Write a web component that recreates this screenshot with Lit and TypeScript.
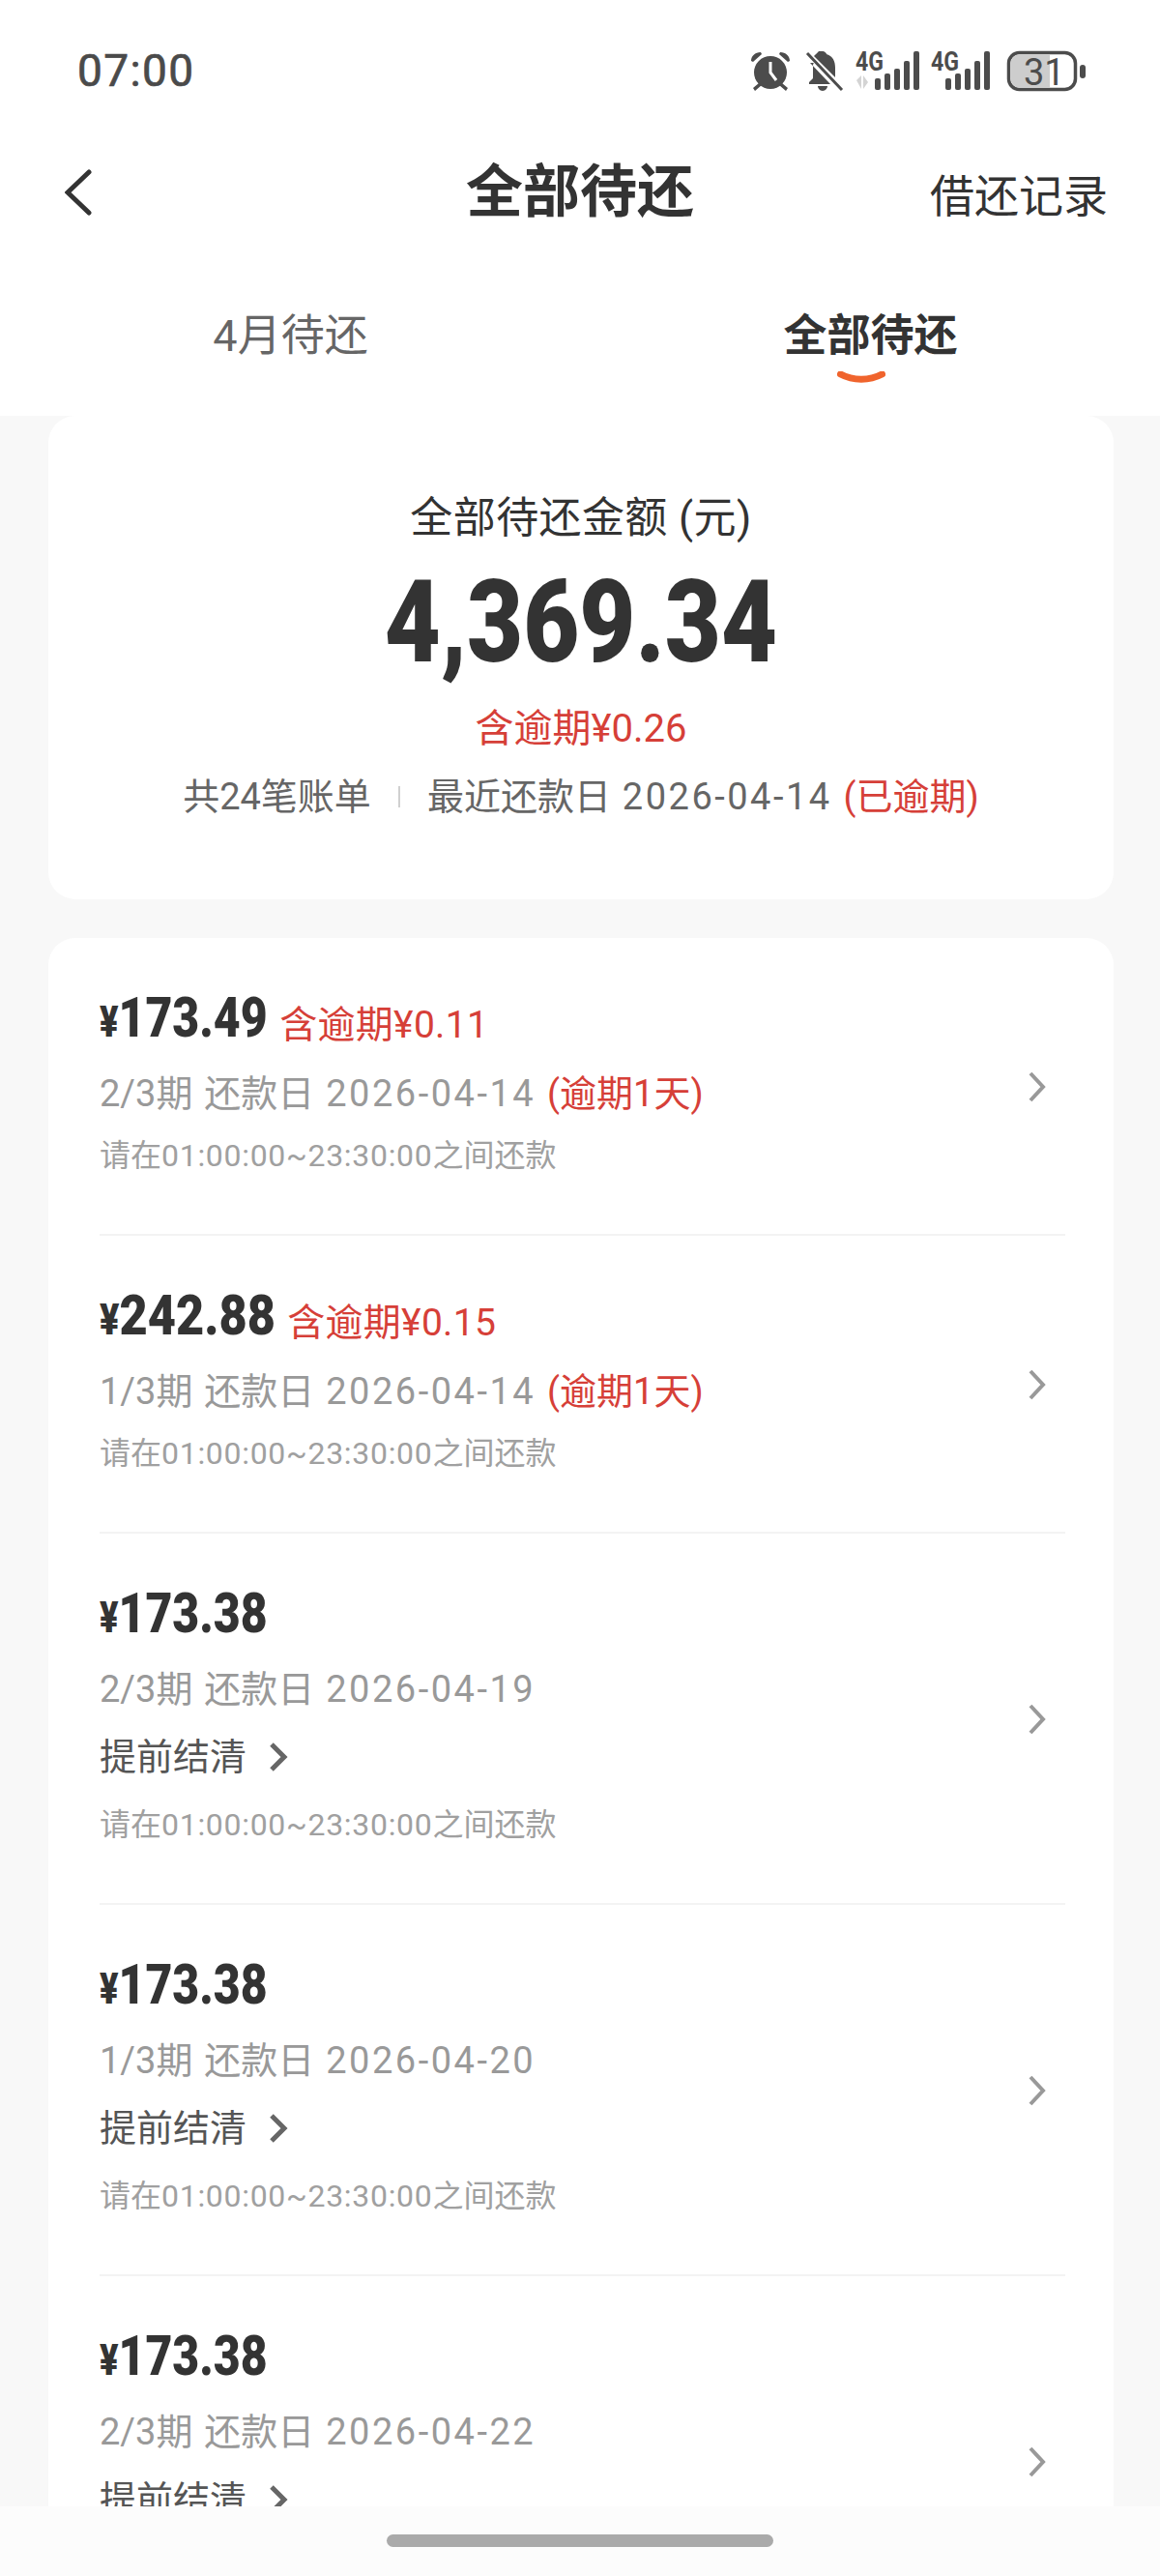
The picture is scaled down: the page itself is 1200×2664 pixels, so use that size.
import { LitElement, html, css, svg, nothing } from "lit";
import { customElement } from "lit/decorators.js";
import { styleMap } from "lit/directives/style-map.js";

interface Bill {
  amount: string;
  scale: number;
  pull: number;
  overdue?: string;
  term: string;
  date: string;
  late?: string;
  settle?: boolean;
}

const bills: Bill[] = [
  { amount: "173.49", scale: 0.83, pull: 36, overdue: "含逾期¥0.11", term: "2/3期", date: "2026-04-14", late: "(逾期1天)" },
  { amount: "242.88", scale: 0.87, pull: 28, overdue: "含逾期¥0.15", term: "1/3期", date: "2026-04-14", late: "(逾期1天)" },
  { amount: "173.38", scale: 0.83, pull: 36, term: "2/3期", date: "2026-04-19", settle: true },
  { amount: "173.38", scale: 0.83, pull: 36, term: "1/3期", date: "2026-04-20", settle: true },
  { amount: "173.38", scale: 0.83, pull: 36, term: "2/3期", date: "2026-04-22", settle: true },
];

const signal = () => svg`
  <rect x="0" y="41" width="6" height="12" rx="2"/>
  <rect x="10" y="36" width="6" height="17" rx="2"/>
  <rect x="20" y="31" width="6" height="22" rx="2"/>
  <rect x="30" y="23" width="6" height="30" rx="2"/>
  <rect x="40" y="13" width="6" height="40" rx="2"/>`;

@customElement("app-root")
export class AppRoot extends LitElement {
  static styles = css`
    :host {
      display: flex;
      flex-direction: column;
      width: 1200px;
      height: 2664px;
      overflow: hidden;
      background: #f8f8f8;
      font-family: Roboto, "Noto Sans CJK SC", sans-serif;
      color: #333;
    }
    .status {
      flex: none;
      height: 146px;
      background: #fff;
      display: flex;
      justify-content: space-between;
      padding-left: 80px;
      box-sizing: border-box;
    }
    .time {
      font-size: 46px;
      line-height: 146px;
      font-weight: 400;
      -webkit-text-stroke: 0.7px #4a4a4a;
      color: #4a4a4a;
      letter-spacing: 1.4px;
    }
    .status-icons {
      flex: none;
      display: block;
    }
    .status-icons .ic { fill: #4c4c4c; }
    .status-icons .g {
      font-family: Roboto, sans-serif;
      font-size: 27px;
      font-weight: 700;
      fill: #4c4c4c;
    }
    .status-icons .bat {
      font-family: Roboto, sans-serif;
      font-size: 38px;
      font-weight: 400;
      fill: #4c4c4c;
    }
    .header {
      flex: none;
      height: 106px;
      background: #fff;
      display: grid;
      grid-template-columns: 1fr auto 1fr;
      align-items: center;
      padding: 0 54px;
    }
    .back { display: block; margin-left: 13px; }
    .title {
      font-size: 59px;
      font-weight: 700;
      line-height: 106px;
      color: #333;
    }
    .records {
      justify-self: end;
      font-size: 46px;
      color: #333;
    }
    .tabs {
      flex: none;
      height: 178px;
      background: #fff;
      display: flex;
      box-sizing: border-box;
      padding-top: 70px;
    }
    .tab {
      display: flex;
      flex-direction: column;
      align-items: center;
      font-size: 45px;
      line-height: 52px;
      color: #666;
    }
    .tab.first { width: 602px; }
    .tab.second {
      width: 600px;
      color: #333;
      font-weight: 700;
    }
    .tab svg { margin: 10px 20px 0 0; display: block; }
    .scroll {
      flex: 1;
      min-height: 0;
      overflow: hidden;
      padding: 0 48px 0 50px;
    }
    .card {
      background: #fff;
      border-radius: 28px;
    }
    .summary {
      height: 500px;
      box-sizing: border-box;
      padding-top: 78px;
      display: flex;
      flex-direction: column;
      align-items: center;
      margin-bottom: 40px;
    }
    .sum-label {
      font-size: 44px;
      line-height: 56px;
      letter-spacing: 0.4px;
      color: #333;
    }
    .sum-num {
      margin-top: 10px;
      font-size: 118px;
      line-height: 140px;
      font-weight: 900;
      transform: scaleX(0.85);
      color: #333;
    }
    .sum-over {
      margin-top: 15px;
      font-size: 40px;
      line-height: 50px;
      color: #d63f38;
    }
    .sum-meta {
      margin-top: 20px;
      font-size: 38px;
      line-height: 50px;
      color: #666;
      display: flex;
      align-items: center;
      white-space: pre;
      word-spacing: 2.5px;
    }
    .sep {
      width: 2px;
      height: 22px;
      background: #d0d0d0;
      margin: 0 28px;
    }
    .date { letter-spacing: 2.5px; }
    .red { color: #d63f38; }
    .row {
      display: flex;
      margin: 0 50px 0 53px;
      border-bottom: 2px solid #f3f3f3;
      box-sizing: border-box;
      padding-top: 50px;
      min-height: 308px;
    }
    .row.tall { min-height: 384px; }
    .info { flex: 1; min-width: 0; }
    .line-amt {
      display: flex;
      align-items: baseline;
      height: 64px;
    }
    .amt {
      display: inline-block;
      font-size: 58px;
      line-height: 64px;
      font-weight: 900;
      transform-origin: left center;
      color: #333;
    }
    .amt small {
      font-size: 0.75em;
      font-weight: 900;
    }
    .over {
      font-size: 39px;
      letter-spacing: 0.3px;
      color: #d63f38;
      margin-left: 13px;
      position: relative;
      top: 1px;
    }
    .line-term {
      margin-top: 22px;
      font-size: 38px;
      line-height: 50px;
      color: #999;
      white-space: pre;
      word-spacing: 2.5px;
    }
    .settle {
      margin-top: 20px;
      display: flex;
      align-items: center;
      font-size: 38px;
      line-height: 50px;
      color: #555;
    }
    .settle svg { margin-left: 22px; display: block; }
    .hint {
      margin-top: 17px;
      font-size: 32px;
      line-height: 44px;
      color: #a0a0a0;
    }
    .row.tall .hint { margin-top: 23px; }
    .clock { letter-spacing: 0.7px; }
    .go {
      align-self: center;
      margin: -48px 19px 0 0;
      display: block;
      flex: none;
    }
    .navbar {
      flex: none;
      height: 72px;
      background: #fcfcfc;
      display: flex;
      justify-content: center;
      padding-top: 29px;
      box-sizing: border-box;
    }
    .pill {
      width: 400px;
      height: 13px;
      border-radius: 7px;
      background: #aaa;
    }
  `;

  private renderIcons() {
    return html`
      <svg class="status-icons" width="440" height="146" viewBox="760 0 440 146">
        <g class="ic">
          <circle cx="797" cy="75" r="17"/>
          <path d="M777 63c0-5 4-9 10-9l1 2-9 8zM817 63c0-5-4-9-10-9l-1 2 9 8z"/>
          <path d="M785 86l-6 5 2 3 7-6zM809 86l6 5-2 3-7-6z"/>
          <path d="M851 53c2 0 4 2 4 3 7 2 9 8 9 14v10l-22-22c2-2 4-4 5-5 0-0 2 0 4 0zM838 65l21 22h-22v-2l4-4v-12c0-2 0-3 1-4zM846 89h10c0 2-2 5-5 5s-5-3-5-5z"/>
        </g>
        <path d="M797 64v11l6 8" fill="none" stroke="#fff" stroke-width="3"/>
        <path d="M835 55l36 38" stroke="#4c4c4c" stroke-width="3" fill="none"/>
        <text class="g" x="885" y="73" textLength="29" lengthAdjust="spacingAndGlyphs">4G</text>
        <path d="M886 83l5-5v14zM893 78l5 7-5 7z" fill="#d4d4d4"/>
        <g class="ic" transform="translate(905 40)">${signal()}</g>
        <text class="g" x="963" y="73" textLength="29" lengthAdjust="spacingAndGlyphs">4G</text>
        <g class="ic" transform="translate(978 40)">${signal()}</g>
        <rect x="1043.5" y="54.5" width="69" height="38" rx="11" fill="#fff" stroke="#4c4c4c" stroke-width="3.5"/>
        <path d="M1056 56h30v35h-30a11 11 0 0 1-11-11v-13a11 11 0 0 1 11-11z" fill="#cdcdcd"/>
        <text class="bat" x="1059" y="88">31</text>
        <rect x="1117" y="67" width="6" height="14" rx="3" fill="#4c4c4c"/>
      </svg>
    `;
  }

  private renderBill(b: Bill) {
    const amtStyle = { transform: `scaleX(${b.scale})`, marginRight: `-${b.pull}px` };
    return html`
      <div class="row ${b.settle ? "tall" : ""}">
        <div class="info">
          <div class="line-amt">
            <span class="amt" style=${styleMap(amtStyle)}><small>¥</small>${b.amount}</span>
            ${b.overdue ? html`<span class="over">${b.overdue}</span>` : nothing}
          </div>
          <div class="line-term">${b.term} 还款日 <span class="date">${b.date}</span>${b.late ? html`<span class="red"> ${b.late}</span>` : nothing}</div>
          ${b.settle
            ? html`<div class="settle">提前结清
                <svg width="22" height="32" viewBox="0 0 22 32"><path d="M4 3l13 13L4 29" fill="none" stroke="#666" stroke-width="5"/></svg>
              </div>`
            : nothing}
          <div class="hint">请在<span class="clock">01:00:00~23:30:00</span>之间还款</div>
        </div>
        <svg class="go" width="20" height="32" viewBox="0 0 20 32"><path d="M3 2l13 14L3 30" fill="none" stroke="#999" stroke-width="4"/></svg>
      </div>
    `;
  }

  render() {
    return html`
      <div class="status">
        <span class="time">07:00</span>
        ${this.renderIcons()}
      </div>
      <div class="header">
        <svg class="back" width="28" height="48" viewBox="0 0 28 48"><path d="M25 3L3 24l22 21" fill="none" stroke="#333" stroke-width="5" stroke-linecap="round"/></svg>
        <div class="title">全部待还</div>
        <div class="records">借还记录</div>
      </div>
      <div class="tabs">
        <div class="tab first">4月待还</div>
        <div class="tab second">全部待还
          <svg width="50" height="12" viewBox="0 0 50 12"><path d="M3.5 3c13 7 30 7 43 0" fill="none" stroke="#f0642d" stroke-width="7" stroke-linecap="round"/></svg>
        </div>
      </div>
      <div class="scroll">
        <div class="card summary">
          <div class="sum-label">全部待还金额 (元)</div>
          <div class="sum-num">4,369.34</div>
          <div class="sum-over">含逾期¥0.26</div>
          <div class="sum-meta"><span>共24笔账单</span><span class="sep"></span><span>最近还款日 <span class="date">2026-04-14</span><span class="red"> (已逾期)</span></span></div>
        </div>
        <div class="card">${bills.map((b) => this.renderBill(b))}</div>
      </div>
      <div class="navbar"><div class="pill"></div></div>
    `;
  }
}
